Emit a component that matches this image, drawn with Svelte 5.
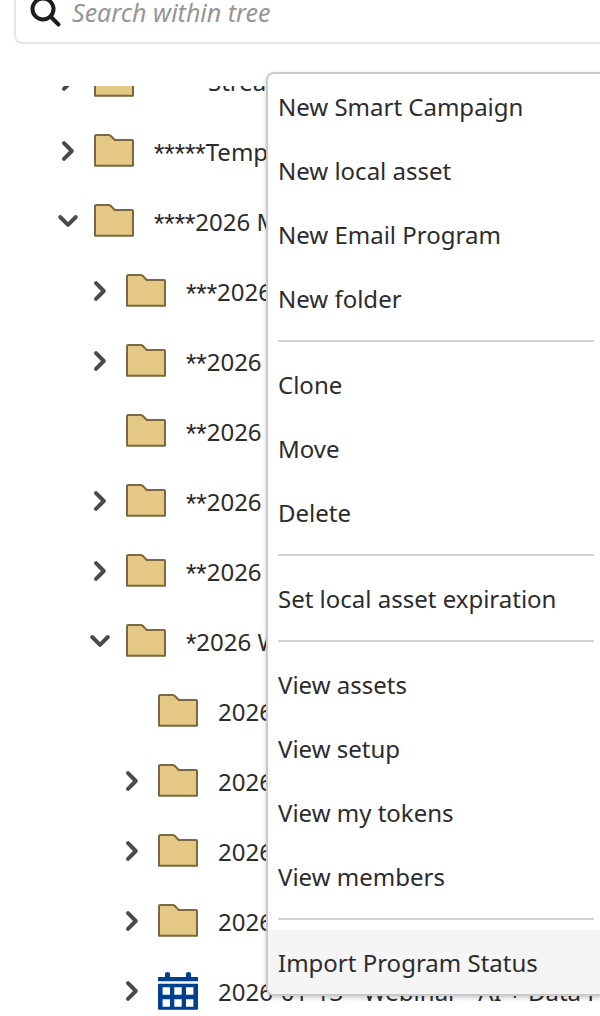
<script lang="ts">
    interface TreeNode {
        stars?: string;
        label: string;
        depth: number;
        state: 'open' | 'closed' | 'leaf';
        icon: 'folder' | 'event';
        indented?: boolean;
    }

    let query = $state('');

    const nodes: TreeNode[] = $state([
        { label: 'Streams', depth: 0, state: 'closed', icon: 'folder', indented: true },
        { stars: '*****', label: 'Templates', depth: 0, state: 'closed', icon: 'folder' },
        { stars: '****', label: '2026 Marketing', depth: 0, state: 'open', icon: 'folder' },
        { stars: '***', label: '2026', depth: 1, state: 'closed', icon: 'folder' },
        { stars: '**', label: '2026', depth: 1, state: 'closed', icon: 'folder' },
        { stars: '**', label: '2026', depth: 1, state: 'leaf', icon: 'folder' },
        { stars: '**', label: '2026', depth: 1, state: 'closed', icon: 'folder' },
        { stars: '**', label: '2026', depth: 1, state: 'closed', icon: 'folder' },
        { stars: '*', label: '2026 Webinars', depth: 1, state: 'open', icon: 'folder' },
        { label: '2026', depth: 2, state: 'leaf', icon: 'folder' },
        { label: '2026', depth: 2, state: 'closed', icon: 'folder' },
        { label: '2026', depth: 2, state: 'closed', icon: 'folder' },
        { label: '2026', depth: 2, state: 'closed', icon: 'folder' },
        { label: '2026-01-13 - Webinar - AI + Data F', depth: 2, state: 'closed', icon: 'event' }
    ]);

    const groups = [
        ['New Smart Campaign', 'New local asset', 'New Email Program', 'New folder'],
        ['Clone', 'Move', 'Delete'],
        ['Set local asset expiration'],
        ['View assets', 'View setup', 'View my tokens', 'View members'],
        ['Import Program Status']
    ];

    let active = $state('Import Program Status');

    function toggle(node: TreeNode) {
        node.state = node.state === 'open' ? 'closed' : 'open';
    }
</script>

<div class="panel">
    <label class="search">
        <svg class="search-icon" viewBox="0 0 32 32" aria-hidden="true">
            <circle cx="13" cy="13" r="10.5" />
            <path d="M20.5 20.5 L28.5 28.5" />
        </svg>
        <input type="text" placeholder="Search within tree" aria-label="Search within tree" bind:value={query} />
    </label>

    <div class="tree">
        <ul>
            {#each nodes as node}
                <li class="depth-{node.depth}">
                    {#if node.state === 'leaf'}
                        <span class="toggle"></span>
                    {:else}
                        <button
                            type="button"
                            class="toggle"
                            aria-label="Toggle {node.label}"
                            aria-expanded={node.state === 'open'}
                            onclick={() => toggle(node)}
                        >
                            <svg viewBox="0 0 20 20" aria-hidden="true">
                                {#if node.state === 'open'}
                                    <path d="M2.2 5 L10 12.8 L17.8 5" />
                                {:else}
                                    <path d="M6 1.2 L13.8 9 L6 16.8" />
                                {/if}
                            </svg>
                        </button>
                    {/if}
                    {#if node.icon === 'folder'}
                        <svg class="icon folder" viewBox="0 0 40 40" aria-hidden="true">
                            <path d="M1 33.8 V4.2 Q1 3 2.2 3 H14.6 Q15.8 3 16.6 3.8 L20.8 8 H38 Q39 8 39 9 V33.8 Z" />
                        </svg>
                    {:else}
                        <svg class="icon event" viewBox="0 0 40 40" aria-hidden="true">
                            <path
                                fill-rule="evenodd"
                                d="M0 5 H7 V1.5 Q7 0 9.5 0 Q12 0 12 1.5 V5 H28 V1.5 Q28 0 30.5 0 Q33 0 33 1.5 V5 H40 V9.2 H0 Z
                                M0 11.7 H40 V36.7 Q40 37.7 39 37.7 H1 Q0 37.7 0 36.7 Z
                                M4.6 15.3 V22.8 H12 V15.3 Z M16.3 15.3 V22.8 H23.7 V15.3 Z M28 15.3 V22.8 H35.4 V15.3 Z
                                M4.6 27.2 V34.7 H12 V27.2 Z M16.3 27.2 V34.7 H23.7 V27.2 Z M28 27.2 V34.7 H35.4 V27.2 Z"
                            />
                        </svg>
                    {/if}
                    <span class:indented={node.indented}>
                        {#if node.stars}<span class="stars">{node.stars}</span>{/if}{node.label}
                    </span>
                </li>
            {/each}
        </ul>
    </div>

    <div class="menu" role="menu">
        {#each groups as group, i}
            {#if i > 0}
                <hr />
            {/if}
            {#each group as item}
                <button
                    type="button"
                    role="menuitem"
                    class:active={active === item}
                    onmouseenter={() => (active = item)}
                >
                    {item}
                </button>
            {/each}
        {/each}
    </div>
</div>

<style>
    :global(body) {
        background: #fff;
        overflow: hidden;
    }

    .panel {
        position: relative;
        height: 100vh;
        overflow: hidden;
        display: flex;
        flex-direction: column;
        font-family: 'Noto Sans', sans-serif;
        font-size: 24px;
        line-height: 32px;
        color: #2c2c2c;
    }

    /* the panel is scrolled, so the box starts above the top edge */
    .search {
        flex: none;
        display: flex;
        align-items: center;
        gap: 10px;
        box-sizing: border-box;
        height: 64px;
        margin: -20px -16px 42px 14px;
        padding: 0 14px;
        border: 2px solid #e6e6e6;
        border-radius: 8px;
    }
    .search-icon {
        flex: none;
        width: 32px;
        height: 32px;
        fill: none;
        stroke: #1e1e1e;
        stroke-width: 4;
        stroke-linecap: round;
    }
    .search input {
        flex: 1;
        min-width: 0;
        padding: 0;
        border: 0;
        outline: none;
        background: none;
        font: inherit;
        font-size: 25px;
        color: inherit;
    }
    .search input::placeholder {
        color: #959595;
        font-style: italic;
        opacity: 1;
    }

    .tree {
        flex: 1;
        min-height: 0;
        overflow: hidden;
    }
    .tree ul {
        list-style: none;
        margin: -39px 0 0;
        padding: 0;
    }
    .tree li {
        display: flex;
        align-items: center;
        height: 70px;
        white-space: nowrap;
    }
    .depth-0 { padding-left: 58px; }
    .depth-1 { padding-left: 90px; }
    .depth-2 { padding-left: 122px; }

    .toggle {
        flex: none;
        width: 20px;
        height: 20px;
        margin-right: 16px;
        padding: 0;
        border: 0;
        background: none;
        cursor: pointer;
    }
    .toggle svg {
        display: block;
        width: 20px;
        height: 20px;
        overflow: visible;
        fill: none;
        stroke: #4b4b4b;
        stroke-width: 4;
        stroke-linecap: round;
        stroke-linejoin: round;
    }

    .icon {
        flex: none;
        width: 40px;
        height: 40px;
        margin-right: 20px;
    }
    .folder {
        fill: #e5c883;
        stroke: #7b6740;
        stroke-width: 2;
        stroke-linejoin: round;
    }
    .event {
        fill: #00408f;
    }
    .indented {
        padding-left: 54px;
    }
    .stars {
        font-family: Roboto, sans-serif;
    }

    .menu {
        position: absolute;
        top: 72px;
        left: 266px;
        right: -6px;
        border: 2px solid #cacaca;
        border-radius: 8px;
        background: #fff;
        box-shadow: 0 2px 4px rgba(0, 0, 0, 0.2);
        overflow: hidden;
    }
    .menu button {
        display: block;
        box-sizing: border-box;
        width: 100%;
        height: 64px;
        padding: 2px 10px 0;
        border: 0;
        background: none;
        font: inherit;
        color: inherit;
        text-align: left;
        cursor: pointer;
    }
    .menu .active {
        background: #f5f5f5;
    }
    .menu hr {
        height: 2px;
        margin: 10px;
        border: 0;
        background: #d2d2d2;
    }
</style>
